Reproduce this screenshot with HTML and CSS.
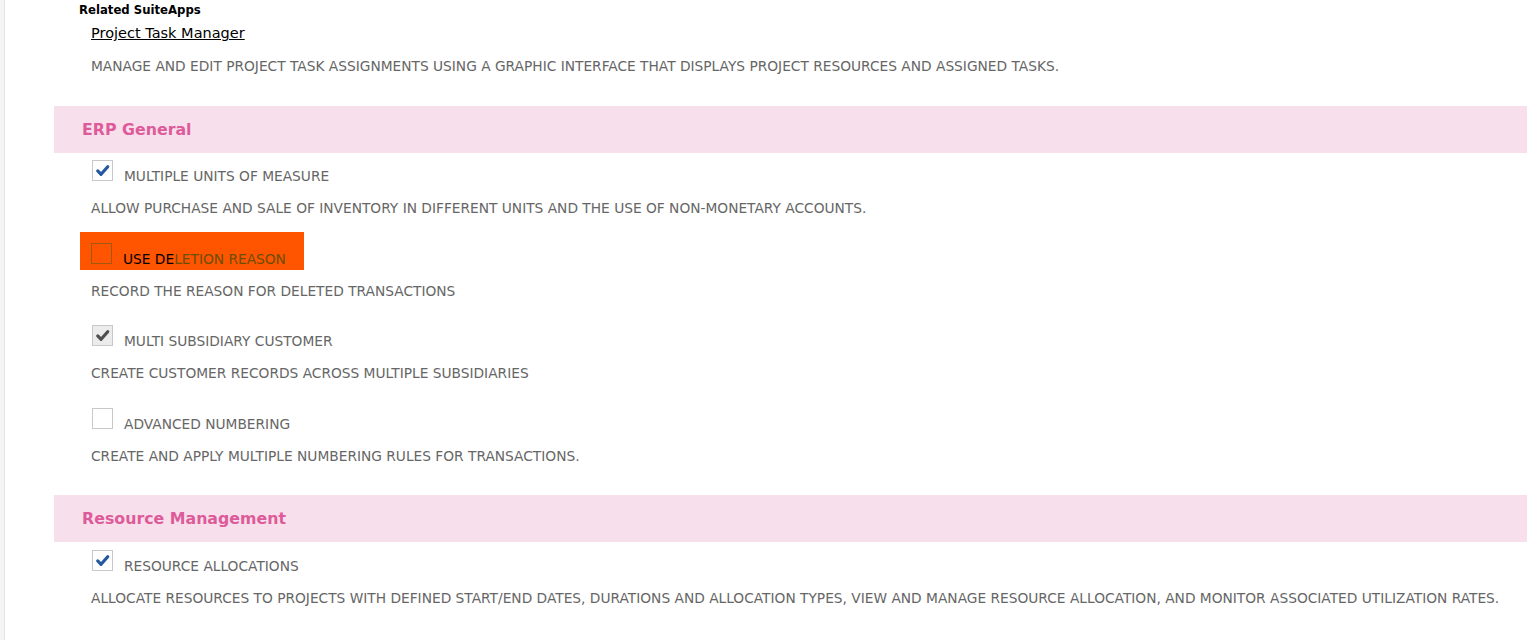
FILE: index.html
```html
<!DOCTYPE html>
<html>
<head>
<meta charset="utf-8">
<link rel="stylesheet" href="styles.css">
</head>
<body>
<div class="page">
  <div class="rail"></div>
  <main class="content">
    <section class="related">
      <div class="related-title">Related SuiteApps</div>
      <a class="related-link" href="#">Project Task Manager</a>
      <p class="desc">MANAGE AND EDIT PROJECT TASK ASSIGNMENTS USING A GRAPHIC INTERFACE THAT DISPLAYS PROJECT RESOURCES AND ASSIGNED TASKS.</p>
    </section>

    <h2 class="band">ERP General</h2>
    <div class="features">
      <div class="feature">
        <div class="opt">
          <span class="cb checked"><svg viewBox="0 0 20 20"><path d="M5 10.5 L8.5 14 L15.5 6" /></svg></span>
          <span class="label">MULTIPLE UNITS OF MEASURE</span>
        </div>
        <p class="desc">ALLOW PURCHASE AND SALE OF INVENTORY IN DIFFERENT UNITS AND THE USE OF NON-MONETARY ACCOUNTS.</p>
      </div>
      <div class="feature">
        <div class="opt hl">
          <span class="cb"></span>
          <span class="label"><span class="dark">USE DE</span>LETION REASON</span>
        </div>
        <p class="desc">RECORD THE REASON FOR DELETED TRANSACTIONS</p>
      </div>
      <div class="feature">
        <div class="opt">
          <span class="cb checked disabled"><svg viewBox="0 0 20 20"><path d="M5 10.5 L8.5 14 L15.5 6" /></svg></span>
          <span class="label">MULTI SUBSIDIARY CUSTOMER</span>
        </div>
        <p class="desc">CREATE CUSTOMER RECORDS ACROSS MULTIPLE SUBSIDIARIES</p>
      </div>
      <div class="feature">
        <div class="opt">
          <span class="cb"></span>
          <span class="label">ADVANCED NUMBERING</span>
        </div>
        <p class="desc">CREATE AND APPLY MULTIPLE NUMBERING RULES FOR TRANSACTIONS.</p>
      </div>
    </div>

    <h2 class="band">Resource Management</h2>
    <div class="features features-last">
      <div class="feature">
        <div class="opt">
          <span class="cb checked"><svg viewBox="0 0 20 20"><path d="M5 10.5 L8.5 14 L15.5 6" /></svg></span>
          <span class="label">RESOURCE ALLOCATIONS</span>
        </div>
        <p class="desc">ALLOCATE RESOURCES TO PROJECTS WITH DEFINED START/END DATES, DURATIONS AND ALLOCATION TYPES, VIEW AND MANAGE RESOURCE ALLOCATION, AND MONITOR ASSOCIATED UTILIZATION RATES.</p>
      </div>
    </div>
  </main>
</div>
</body>
</html>
```

FILE: styles.css
```css
html, body {
  margin: 0;
  padding: 0;
  background: #ffffff;
}
body {
  font-family: Tahoma, "DejaVu Sans", Verdana, sans-serif;
  color: #666666;
  overflow: hidden;
}
.page {
  display: flex;
  min-height: 640px;
}
.rail {
  flex: 0 0 4px;
  background: #f4f4f4;
  border-right: 1px solid #e4e4e4;
}
.content {
  flex: 1;
  padding-left: 49px;
}
.related {
  padding-left: 25px;
}
.related-title {
  font-size: 11.7px;
  font-weight: bold;
  color: #000;
  line-height: 16px;
  padding-top: 2px;
}
.related-link {
  display: inline-block;
  margin-left: 12px;
  margin-top: 6px;
  font-size: 14.5px;
  line-height: 18px;
  color: #000;
  text-decoration: underline;
}
.desc {
  margin: 0;
  font-size: 13.75px;
  line-height: 16px;
  color: #666666;
}
.related .desc {
  margin-left: 12px;
  margin-top: 16px;
}
.band {
  margin: 32px 0 0 0;
  height: 47px;
  line-height: 47px;
  background: #f7e0ec;
  color: #de5b9a;
  font-size: 15.8px;
  font-weight: bold;
  padding-left: 28px;
}
.features + .band {
  margin-top: 31px;
}
.features {
  display: flex;
  flex-direction: column;
  gap: 27px;
  padding-left: 37px;
  padding-top: 7px;
}
.features-last {
  padding-top: 8px;
}
.feature:nth-child(3) {
  margin-top: -1px;
}
.feature .desc {
  margin-top: 19px;
}
.opt {
  display: flex;
  align-items: flex-end;
  height: 21px;
}
.cb {
  box-sizing: border-box;
  width: 21px;
  height: 21px;
  border: 1px solid #c9c9c9;
  background: #fff;
  margin-left: 1px;
  display: flex;
  align-items: center;
  justify-content: center;
}
.cb svg {
  width: 19px;
  height: 19px;
  fill: none;
  stroke: #24589f;
  stroke-width: 3.4;
  stroke-linecap: round;
  stroke-linejoin: round;
}
.cb.disabled {
  background: #ececec;
}
.cb.disabled svg {
  stroke: #505050;
}
.label {
  margin-left: 11px;
  font-size: 13.75px;
  line-height: 14px;
  margin-bottom: -2px;
  color: #666666;
}
.opt.hl {
  width: fit-content;
  background: #ff5500;
  margin: -11px 0 -6px -11px;
  padding: 11px 18px 6px 10px;
}
.opt.hl .cb {
  background: transparent;
  border-color: #a05a10;
}
.opt.hl .label {
  color: #6b4e00;
}
.opt.hl .dark {
  color: #000;
}
```
